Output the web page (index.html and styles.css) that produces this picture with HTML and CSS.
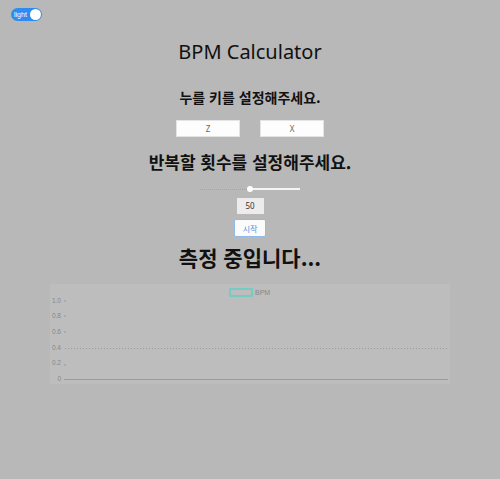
FILE: index.html
```html
<!DOCTYPE html>
<html lang="ko">
<head>
<meta charset="utf-8">
<link rel="stylesheet" href="styles.css">
</head>
<body>
<div class="topbar">
  <label class="toggle"><span class="toggle-text">light</span><span class="knob"></span></label>
</div>
<main class="app">
  <h1 class="title">BPM Calculator</h1>
  <h2 class="prompt">누를 키를 설정해주세요.</h2>
  <div class="keys">
    <button class="key">Z</button>
    <button class="key">X</button>
  </div>
  <h2 class="prompt2">반복할 횟수를 설정해주세요.</h2>
  <div class="slider">
    <span class="track-left"></span><span class="thumb"></span><span class="track-right"></span>
  </div>
  <div class="count">50</div>
  <button class="start">시작</button>
  <h1 class="status">측정 중입니다...</h1>
  <div class="chart">
    <svg width="400" height="100" viewBox="0 0 400 100">
      <rect x="180" y="5" width="22" height="7" fill="none" stroke="#5fcfc6" stroke-width="1.5"/>
      <text x="205" y="11" class="legend">BPM</text>
      <g class="ylab">
        <text x="11" y="19">1.0</text>
        <text x="11" y="34">0.8</text>
        <text x="11" y="50">0.6</text>
        <text x="11" y="66">0.4</text>
        <text x="11" y="81">0.2</text>
        <text x="11" y="97">0</text>
      </g>
      <g stroke="#999" stroke-width="1">
        <line x1="14" y1="17" x2="16" y2="17"/>
        <line x1="14" y1="32" x2="16" y2="32"/>
        <line x1="14" y1="48" x2="16" y2="48"/>
        <line x1="14" y1="81" x2="16" y2="81"/>
      </g>
      <line x1="15" y1="64.5" x2="399" y2="64.5" stroke="#999" stroke-width="1" stroke-dasharray="1,2"/>
      <line x1="14" y1="95.5" x2="398" y2="95.5" stroke="#9a9a9a" stroke-width="1"/>
    </svg>
  </div>
</main>
</body>
</html>
```
FILE: styles.css
```css
html, body {
  margin: 0;
  padding: 0;
}
body {
  background: #b8b8b8;
  width: 500px;
  height: 479px;
  overflow: hidden;
  font-family: "Noto Sans", "Noto Sans CJK KR", sans-serif;
  color: #111;
}
.topbar {
  display: flex;
  padding: 8px 0 0 11px;
  height: 13px;
}
.toggle {
  display: flex;
  align-items: center;
  justify-content: space-between;
  width: 31px;
  height: 13px;
  box-sizing: border-box;
  background: #2d8cf0;
  border-radius: 7px;
  padding: 0 1px 0 3px;
}
.toggle-text {
  color: #fff;
  font-size: 7px;
  line-height: 13px;
  font-family: "Liberation Sans", sans-serif;
}
.knob {
  width: 11px;
  height: 11px;
  border-radius: 50%;
  background: #fff;
}
.app {
  display: flex;
  flex-direction: column;
  align-items: center;
}
.title {
  margin: 18px 0 0;
  font-size: 20px;
  font-weight: 400;
  line-height: 26px;
  font-family: "Noto Sans", "Noto Sans CJK KR", sans-serif;
}
.prompt {
  margin: 22px 0 0;
  font-size: 14px;
  font-weight: 700;
  line-height: 20px;
  font-family: "Noto Sans CJK KR", sans-serif;
}
.keys {
  display: flex;
  gap: 20px;
  margin-top: 13px;
}
.key {
  width: 64px;
  height: 17px;
  background: #fdfdfd;
  border: 1px solid #e4e4e4;
  font-size: 8px;
  color: #666;
  padding: 0;
  font-family: "Noto Sans", sans-serif;
}
.prompt2 {
  margin: 13px 0 0;
  font-size: 17px;
  font-weight: 700;
  line-height: 24px;
  font-family: "Noto Sans CJK KR", sans-serif;
}
.slider {
  display: flex;
  align-items: center;
  width: 100px;
  height: 8px;
  margin-top: 11px;
}
.track-left {
  flex: 1;
  border-top: 1px dotted #9aa6b2;
}
.thumb {
  width: 6px;
  height: 6px;
  border-radius: 50%;
  background: #fff;
}
.track-right {
  flex: 1;
  height: 2px;
  background: #f4f4f4;
}
.count {
  margin-top: 5px;
  width: 27px;
  height: 16px;
  background: #ececec;
  font-size: 8px;
  line-height: 16px;
  text-align: center;
  color: #333;
  font-family: "Noto Sans", sans-serif;
}
.start {
  margin-top: 5px;
  width: 32px;
  height: 18px;
  background: #fbfbfb;
  border: 1px solid #8fbbe8;
  border-radius: 2px;
  color: #4a90e2;
  font-size: 8px;
  padding: 0;
  font-family: "Noto Sans CJK KR", sans-serif;
}
.status {
  margin: 5px 0 0;
  font-size: 21px;
  font-weight: 700;
  line-height: 30px;
  font-family: "Noto Sans CJK KR", sans-serif;
}
.chart {
  margin-top: 12px;
  width: 400px;
  height: 100px;
  background: #bdbdbd;
}
.chart svg {
  display: block;
}
.legend {
  font-size: 7px;
  fill: #888;
  font-family: "Liberation Sans", sans-serif;
}
.ylab text {
  font-size: 6.5px;
  fill: #888;
  text-anchor: end;
  font-family: "Liberation Sans", sans-serif;
}
```
